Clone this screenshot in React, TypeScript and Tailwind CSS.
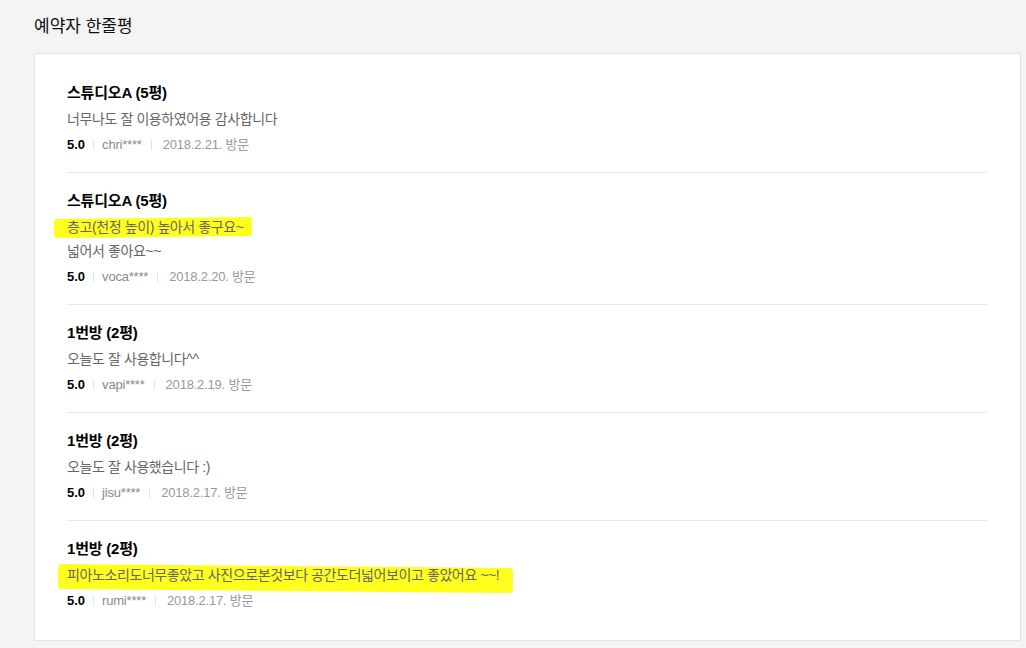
const reviews = [
  {
    room: "스튜디오A (5평)",
    lines: [{ text: "너무나도 잘 이용하였어용 감사합니다" }],
    user: "chri****",
    date: "2018.2.21. 방문",
  },
  {
    room: "스튜디오A (5평)",
    lines: [{ text: "층고(천정 높이) 높아서 좋구요~", mark: "short" }, { text: "넓어서 좋아요~~" }],
    user: "voca****",
    date: "2018.2.20. 방문",
  },
  {
    room: "1번방 (2평)",
    lines: [{ text: "오늘도 잘 사용합니다^^" }],
    user: "vapi****",
    date: "2018.2.19. 방문",
  },
  {
    room: "1번방 (2평)",
    lines: [{ text: "오늘도 잘 사용했습니다 :)" }],
    user: "jisu****",
    date: "2018.2.17. 방문",
  },
  {
    room: "1번방 (2평)",
    lines: [{ text: "피아노소리도너무좋았고 사진으로본것보다 공간도더넓어보이고 좋았어요 ~~!", mark: "long" }],
    user: "rumi****",
    date: "2018.2.17. 방문",
  },
];

const Marked = ({ text, mark }: { text: string; mark?: string }) => {
  if (!mark) return <>{text}</>;
  return (
    <span className="relative isolate inline-block">
      {mark === "short" ? (
        <span className="absolute -left-[13px] -right-[8px] top-[3px] bottom-[2px] -z-10 bg-[#ffff1e] rounded-[3px] -rotate-[0.6deg]" />
      ) : (
        <span className="absolute -left-[9px] -right-[14px] top-[3px] -bottom-[4px] -z-10 bg-[#ffff1e] rounded-[4px] rotate-[0.5deg]" />
      )}
      {text}
    </span>
  );
};

const Review = ({ review, last }: { review: (typeof reviews)[number]; last: boolean }) => {
  return (
    <li className={"pt-[18px] pb-[19px] " + (last ? "" : "border-b border-[#eaeaea]")}>
      <p className="text-[15px] leading-[20px] font-bold text-black tracking-[-0.2px]">{review.room}</p>
      <div className="mt-[4px]">
        {review.lines.map((line, i) => (
          <p key={i} className="text-[14px] leading-[24px] text-[#666] tracking-[-0.4px]">
            <Marked text={line.text} mark={line.mark} />
          </p>
        ))}
      </div>
      <div className="mt-[6px] flex items-center text-[13px] leading-[16px]">
        <span className="font-bold text-black">5.0</span>
        <span className="mx-[8px] h-[10px] w-px bg-[#e2e2e2]" />
        <span className="text-[#8a8a8a] tracking-[-0.2px]">{review.user}</span>
        <span className="ml-[9px] mr-[11px] h-[10px] w-px bg-[#e2e2e2]" />
        <span className="text-[#999] tracking-[-0.2px]">{review.date}</span>
      </div>
    </li>
  );
};

const App = () => {
  return (
    <section
      className="min-h-[648px] bg-[#f4f4f4] pt-[15px]"
      style={{ fontFamily: '"Liberation Sans", "Noto Sans CJK KR", sans-serif' }}
    >
      <h2 className="ml-[34px] text-[17px] leading-[24px] text-[#111]">예약자 한줄평</h2>
      <div className="mt-[14px] ml-[34px] w-[987px] border border-[#e3e3e3] bg-white px-[32px] pt-[11px] pb-[12px]">
        <ul>
          {reviews.map((review, i) => (
            <Review key={i} review={review} last={i === reviews.length - 1} />
          ))}
        </ul>
      </div>
    </section>
  );
};

export default App;
